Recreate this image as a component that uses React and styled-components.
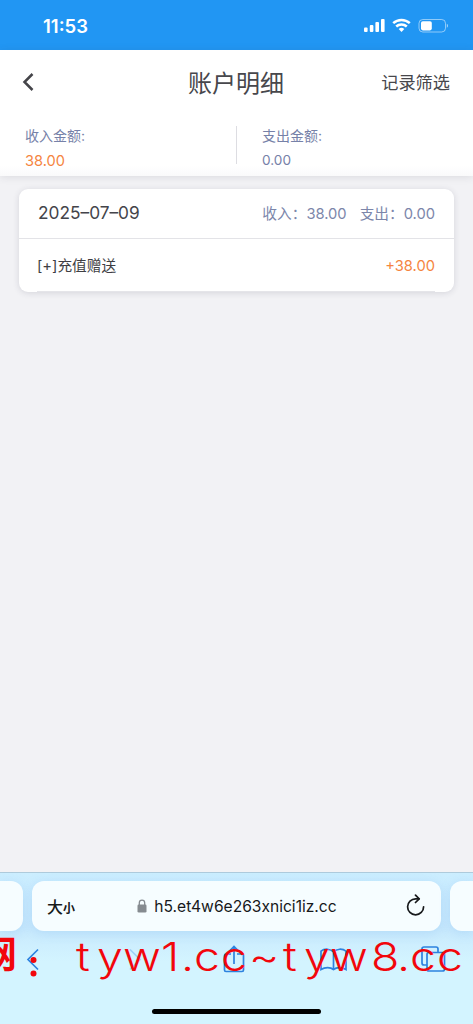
import React from "react";
import styled, { createGlobalStyle } from "styled-components";

const GlobalStyle = createGlobalStyle`
  * {
    box-sizing: border-box;
  }
  body {
    margin: 0;
    background: #f2f2f5;
    font-family: Inter, "Noto Sans CJK SC", sans-serif;
  }
`;

// the single record group shown on the page
const groups = [
  {
    date: "2025–07–09",
    income: "38.00",
    expense: "0.00",
    records: [{ name: "[+]充值赠送", amount: "+38.00" }],
  },
];

// left edge of every letter in the red site line
const siteText = "tyw1.cc~tyw8.cc";
const siteLeft = [76, 97, 123, 161, 181, 194, 221, 249, 283, 304, 330, 371, 397, 410, 437];
const siteStretch = 1.16;

function StatusIcons() {
  return (
    <svg width="86" height="16" viewBox="0 0 86 16" fill="#fff">
      <rect x="1" y="9.5" width="3.6" height="4.5" rx="1" />
      <rect x="6.8" y="7" width="3.6" height="7" rx="1" />
      <rect x="12.4" y="4" width="3.6" height="10" rx="1" />
      <rect x="18" y="1" width="3.6" height="13" rx="1" />
      <g fill="none" stroke="#fff" strokeWidth="2.5">
        <path d="M30.2 5.2a12.2 12.2 0 0 1 16.6 0" />
        <path d="M33.2 8.5a7.8 7.8 0 0 1 10.6 0" />
      </g>
      <path d="M38.5 14l-2.8-3a4.2 4.2 0 0 1 5.6 0z" />
      <rect
        x="56"
        y="1.5"
        width="26.5"
        height="12.5"
        rx="3.8"
        fill="none"
        stroke="#fff"
        strokeOpacity=".5"
      />
      <rect x="58" y="3.2" width="10.8" height="9.2" rx="1.8" />
      <path d="M83.8 5.7v4c1.6-.6 1.6-3.4 0-4z" fillOpacity=".6" />
    </svg>
  );
}

function LockIcon() {
  return (
    <svg width="10" height="14" viewBox="0 0 10 14">
      <rect x=".5" y="5.5" width="9" height="8" rx="1.3" fill="#858b90" />
      <path
        d="M2.3 6V3.8a2.7 2.7 0 0 1 5.4 0V6"
        fill="none"
        stroke="#858b90"
        strokeWidth="1.3"
      />
    </svg>
  );
}

function ReloadIcon() {
  return (
    <svg
      width="20"
      height="24"
      viewBox="0 0 20 24"
      fill="none"
      stroke="#17191b"
      strokeWidth="1.7"
      strokeLinecap="round"
      strokeLinejoin="round"
    >
      <path d="M17.6 12.8A8 8 0 1 1 9.7 4.8h3.2" />
      <path d="M9.5 1.2l3.7 3.6-3.7 3.7" />
    </svg>
  );
}

function App() {
  return (
    <>
      <GlobalStyle />
      <Phone>
        <StatusBar>
          <Clock>11:53</Clock>
          <StatusIcons />
        </StatusBar>

        <Header>
          <NavBar>
            <BackButton aria-label="back">
              <svg width="14" height="20" viewBox="0 0 14 20">
                <path
                  d="M10.5 2L2.5 10l8 8"
                  fill="none"
                  stroke="#444449"
                  strokeWidth="2.5"
                />
              </svg>
            </BackButton>
            <Title>账户明细</Title>
            <FilterButton>记录筛选</FilterButton>
          </NavBar>
          <Summary>
            <Total>
              <TotalLabel>收入金额:</TotalLabel>
              <TotalValue $accent>38.00</TotalValue>
            </Total>
            <Divider />
            <Total>
              <TotalLabel>支出金额:</TotalLabel>
              <TotalValue>0.00</TotalValue>
            </Total>
          </Summary>
        </Header>

        <Content>
          {groups.map((group) => (
            <Card key={group.date}>
              <CardHead>
                <DateText>{group.date}</DateText>
                <DayTotals>
                  <span>收入：{group.income}</span>
                  <span>支出：{group.expense}</span>
                </DayTotals>
              </CardHead>
              {group.records.map((record) => (
                <Row key={record.name}>
                  <RecordName>{record.name}</RecordName>
                  <Amount>{record.amount}</Amount>
                </Row>
              ))}
            </Card>
          ))}
        </Content>

        <Browser>
          <Tabs>
            <SideTab $left />
            <AddressBar>
              <TextSize>
                大<small>小</small>
              </TextSize>
              <Address>
                <LockIcon />
                <span>h5.et4w6e263xnici1iz.cc</span>
              </Address>
              <ReloadIcon />
            </AddressBar>
            <SideTab />
          </Tabs>
          <Toolbar>
            <svg width="28" height="30" viewBox="0 0 28 30">
              <path d="M19 5.5L9 15.5l10 10" />
            </svg>
            <svg width="28" height="30" viewBox="0 0 28 30" opacity=".3">
              <path d="M11 5.5l10 10-10 10" />
            </svg>
            <svg width="28" height="30" viewBox="0 0 28 30">
              <path d="M12 10H7a1.5 1.5 0 0 0-1.5 1.5V26A1.5 1.5 0 0 0 7 27.5h16a1.5 1.5 0 0 0 1.5-1.5V11.5A1.5 1.5 0 0 0 23 10h-5M15 20V2.5M11 6.5l4-4 4 4" />
            </svg>
            <svg width="28" height="30" viewBox="0 0 28 30">
              <path d="M14.5 8c-3-3.4-9-3.7-12.5-.8v18.3c4-2.5 9.5-2.5 12.5 0 3-2.5 8.5-2.5 12.5 0V7.2C23.5 4.3 17.5 4.6 14.5 8zM14.5 8v17.5" />
            </svg>
            <svg width="28" height="30" viewBox="0 0 28 30">
              <path d="M8 21H5a2 2 0 0 1-2-2V5a2 2 0 0 1 2-2h12a2 2 0 0 1 2 2v3.5" />
              <rect x="8" y="8.5" width="17.5" height="18.5" rx="2" />
            </svg>
          </Toolbar>
          <HomeIndicator />
          {/* red site line lying over the toolbar */}
          <SiteLine viewBox="0 0 473 54">
            <SiteMark x="-20" y="33">
              网
            </SiteMark>
            <circle cx="33.5" cy="25" r="3" />
            <circle cx="33.5" cy="38.5" r="3" />
            <SiteText
              transform={`scale(${siteStretch} 1)`}
              x={siteLeft.map((left) => left / siteStretch).join(" ")}
              y="36"
            >
              {siteText}
            </SiteText>
          </SiteLine>
        </Browser>
      </Phone>
    </>
  );
}

export default App;

const Phone = styled.div`
  display: flex;
  flex-direction: column;
  width: 473px;
  height: 1024px;
  overflow: hidden;
  background: #f2f2f5;
`;
const StatusBar = styled.div`
  display: flex;
  flex: none;
  justify-content: space-between;
  align-items: center;
  height: 50px;
  padding: 2px 24px 0 43px;
  background: #2196f3;
`;
const Clock = styled.span`
  color: #fff;
  font-size: 18.5px;
  font-weight: 600;
`;
const Header = styled.header`
  flex: none;
  height: 126px;
  background: linear-gradient(#fff 116px, #fafafb);
  box-shadow: 0 1px 8px rgba(60, 60, 75, 0.12);
`;
const NavBar = styled.div`
  display: grid;
  grid-template-columns: 1fr auto 1fr;
  align-items: center;
  height: 64px;
  padding: 0 23px 0 22px;
  color: #47474c;
`;
const BackButton = styled.button`
  display: flex;
  padding: 0;
  border: none;
  background: none;
`;
const Title = styled.h1`
  margin: 0;
  padding-top: 3px;
  font-size: 24px;
  font-weight: 400;
  line-height: 32px;
`;
const FilterButton = styled.span`
  justify-self: end;
  padding-bottom: 1px;
  font-size: 17.2px;
`;
const Summary = styled.div`
  display: flex;
  align-items: flex-start;
  padding: 12px 0 0 25px;
`;
const Total = styled.div`
  flex: none;
  width: 211px;
`;
const TotalLabel = styled.div`
  color: #7681a8;
  font-size: 14px;
  line-height: 20px;
`;
const TotalValue = styled.div`
  margin-top: ${(props) => (props.$accent ? "5px" : "4px")};
  color: ${(props) => (props.$accent ? "#f5853f" : "#7681a8")};
  font-size: ${(props) => (props.$accent ? "14.6px" : "13.6px")};
  line-height: 20px;
`;
const Divider = styled.div`
  flex: none;
  width: 1px;
  height: 38px;
  margin-right: 25px;
  background: #dddde2;
`;
const Content = styled.main`
  flex: 1;
  padding: 13px 19px;
`;
const Card = styled.section`
  height: 103px;
  border-radius: 9px;
  background: #fff;
  box-shadow: 0 1px 6px rgba(50, 50, 75, 0.15);
`;
const CardHead = styled.div`
  display: flex;
  justify-content: space-between;
  align-items: center;
  height: 50px;
  padding: 0 19px 2px;
  border-bottom: 1px solid #e3e3e7;
`;
const DateText = styled.span`
  color: #44444a;
  font-size: 17.3px;
`;
const DayTotals = styled.div`
  display: flex;
  gap: 13px;
  color: #7c86aa;
  font-size: 14.7px;
`;
const Row = styled.div`
  display: flex;
  justify-content: space-between;
  align-items: center;
  height: 53px;
  margin: 0 19px 0 18px;
  padding-bottom: 1px;
  border-bottom: 1px solid #e5e5e9;
`;
const RecordName = styled.span`
  color: #3e3e43;
  font-size: 14.7px;
`;
const Amount = styled.span`
  padding-top: 2px;
  color: #f5853f;
  font-size: 14.7px;
`;
const Browser = styled.footer`
  position: relative;
  display: flex;
  flex: none;
  flex-direction: column;
  height: 152px;
  border-top: 1px solid #aecbdc;
  background: linear-gradient(#cceeff, #c8e9fd 55px, #d3f4ff 88px);
`;
const Tabs = styled.div`
  display: flex;
  gap: 9px;
  height: 50px;
  margin-top: 8px;
`;
const SideTab = styled.div`
  width: 23px;
  border-radius: ${(props) => (props.$left ? "0 12px 12px 0" : "12px 0 0 12px")};
  background: #f6fdff;
  box-shadow: 0 2px 12px rgba(80, 150, 230, 0.18);
`;
const AddressBar = styled.div`
  display: flex;
  justify-content: space-between;
  align-items: center;
  width: 409px;
  padding: 0 15px;
  border-radius: 12px;
  background: #f6fdff;
  box-shadow: 0 2px 12px rgba(80, 150, 230, 0.18);
  color: #17191b;
`;
const TextSize = styled.span`
  width: 20px;
  font-size: 16px;
  font-weight: 500;
  white-space: nowrap;

  small {
    font-size: 12px;
    font-weight: 700;
  }
`;
const Address = styled.div`
  display: flex;
  align-items: center;
  gap: 7px;
  padding-left: 1px;
  font-size: 15.6px;
  white-space: nowrap;
`;
const Toolbar = styled.div`
  display: flex;
  justify-content: space-between;
  align-items: center;
  height: 30px;
  margin-top: 13px;
  padding: 0 26px 0 19px;
  fill: none;
  stroke: #2d82df;
  stroke-width: 1.7;
`;
const HomeIndicator = styled.div`
  width: 169px;
  height: 5px;
  margin: 35px auto 0 152px;
  border-radius: 3px;
  background: #000;
`;
const SiteLine = styled.svg`
  position: absolute;
  left: 0;
  top: 62px;
  width: 473px;
  height: 54px;
  overflow: visible;
  fill: #f2060c;
`;
const SiteMark = styled.text`
  font-family: "Noto Sans CJK SC", sans-serif;
  font-size: 37px;
  font-weight: 700;
`;
const SiteText = styled.text`
  font-family: Inter, sans-serif;
  font-size: 40px;
  font-weight: 300;
`;
